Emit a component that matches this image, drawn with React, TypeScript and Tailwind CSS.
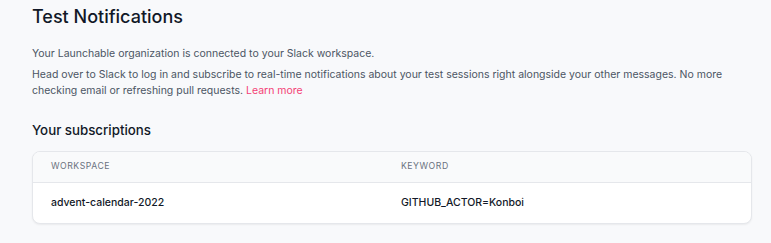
const rows = [{ workspace: "advent-calendar-2022", keyword: "GITHUB_ACTOR=Konboi" }];

export default function App() {
  return (
    <div className="min-h-[243px] w-full bg-[#f8f9fb] px-8 pt-[5px] font-['Inter',sans-serif] text-[#1f2937]">
      <h1 className="text-[18px] font-medium leading-6 text-[#111827]">Test Notifications</h1>

      <p className="mt-[17px] text-[10.5px] leading-4 text-[#4b5563]">
        Your Launchable organization is connected to your Slack workspace.
      </p>
      <p className="mt-[5px] max-w-[712px] text-[10.5px] leading-4 text-[#4b5563]">
        Head over to Slack to log in and subscribe to real-time notifications about your test
        sessions right alongside your other messages. No more checking email or refreshing pull
        requests.{" "}
        <a href="#" className="text-[#f43f75]">
          Learn more
        </a>
      </p>

      <h2 className="mt-[21px] text-[13.3px] font-medium leading-5 text-[#111827]">
        Your subscriptions
      </h2>

      <div className="mt-[11px] w-[720px] overflow-hidden rounded-lg border border-[#e5e7eb] bg-white shadow-[0_1px_2px_rgba(0,0,0,0.06)]">
        <div className="grid h-[31px] grid-cols-[350px_1fr] items-center border-b border-[#e5e7eb] bg-[#f9fafb] px-[18px] text-[8.7px] uppercase tracking-[0.06em] text-[#6b7280]">
          <span>Workspace</span>
          <span>Keyword</span>
        </div>
        {rows.map((r) => (
          <div
            key={r.workspace}
            className="grid h-[40px] grid-cols-[350px_1fr] items-center px-[18px] text-[10.5px] font-medium text-[#111827]"
          >
            <span>{r.workspace}</span>
            <span>{r.keyword}</span>
          </div>
        ))}
      </div>
    </div>
  );
}
